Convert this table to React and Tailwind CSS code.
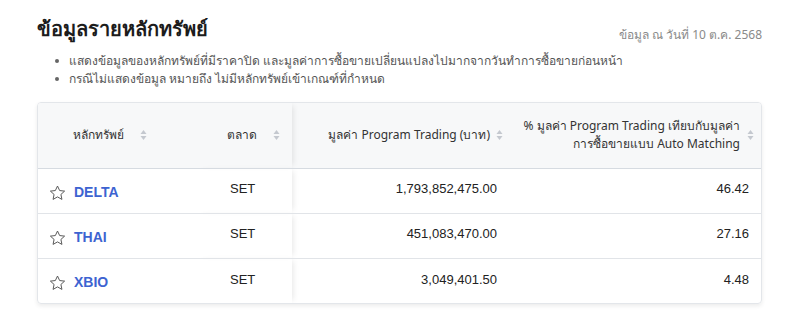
import React from "react";

const rows = [
  { symbol: "DELTA", market: "SET", value: "1,793,852,475.00", pct: "46.42" },
  { symbol: "THAI", market: "SET", value: "451,083,470.00", pct: "27.16" },
  { symbol: "XBIO", market: "SET", value: "3,049,401.50", pct: "4.48" },
];

function SortIcon() {
  return (
    <svg width="7" height="12" viewBox="0 0 7 12" className="shrink-0">
      <path d="M3.5 1 L6.5 5 L0.5 5 Z" fill="#c4c8cf" />
      <path d="M3.5 11 L6.5 7 L0.5 7 Z" fill="#c4c8cf" />
    </svg>
  );
}

function StarIcon() {
  return (
    <svg width="17" height="16" viewBox="0 0 24 23" fill="none" stroke="#555" strokeWidth="1.4" strokeLinejoin="round">
      <path d="M12 1.5 L15.1 8 L22.2 8.8 L16.9 13.6 L18.4 20.7 L12 17.1 L5.6 20.7 L7.1 13.6 L1.8 8.8 L8.9 8 Z" />
    </svg>
  );
}

export default function App() {
  return (
    <div className="w-[812px] h-[329px] bg-white pl-[37px] pr-[50px] pt-[14px] font-['Noto_Sans','Liberation_Sans',sans-serif]">
      <div className="flex items-end justify-between">
        <h1 className="text-[20px] font-bold text-[#1c1c1c] leading-[30px]">ข้อมูลรายหลักทรัพย์</h1>
        <span className="text-[12px] text-[#8a8a8a] leading-[20px] mb-[-1px]">ข้อมูล ณ วันที่ 10 ต.ค. 2568</span>
      </div>
      <ul className="mt-[8px] pl-[18px] text-[12px] leading-[18px] text-[#555]">
        <li className="flex items-center gap-[10px]">
          <span className="w-[4px] h-[4px] rounded-full bg-[#666]"></span>
          แสดงข้อมูลของหลักทรัพย์ที่มีราคาปิด และมูลค่าการซื้อขายเปลี่ยนแปลงไปมากจากวันทำการซื้อขายก่อนหน้า
        </li>
        <li className="flex items-center gap-[10px]">
          <span className="w-[4px] h-[4px] rounded-full bg-[#666]"></span>
          กรณีไม่แสดงข้อมูล หมายถึง ไม่มีหลักทรัพย์เข้าเกณฑ์ที่กำหนด
        </li>
      </ul>
      <div className="mt-[14px] w-[725px] rounded-[4px] border border-[#e3e6ea] shadow-[0_2px_4px_rgba(0,0,0,0.08)] overflow-hidden">
        <table className="w-full table-fixed border-collapse">
          <colgroup>
            <col className="w-[158px]" />
            <col className="w-[96px]" />
            <col className="w-[217px]" />
            <col />
          </colgroup>
          <thead>
            <tr className="h-[65px] bg-[#f7f8f9] text-[12px] text-[#333] border-b border-[#d6dbe1]">
              <th className="font-normal">
                <div className="flex items-center justify-start gap-[16px] pl-[35px]">
                  หลักทรัพย์ <SortIcon />
                </div>
              </th>
              <th className="font-normal shadow-[4px_0_6px_-3px_rgba(0,0,0,0.1)]">
                <div className="flex items-center justify-end gap-[16px] pr-[12px]">
                  ตลาด <SortIcon />
                </div>
              </th>
              <th className="font-normal">
                <div className="flex items-center justify-end gap-[6px] pr-[6px]">
                  มูลค่า Program Trading (บาท) <SortIcon />
                </div>
              </th>
              <th className="font-normal">
                <div className="flex items-center justify-end gap-[7px] pr-[7px]">
                  <span className="text-right leading-[18px]">
                    % มูลค่า Program Trading เทียบกับมูลค่า
                    <br />
                    การซื้อขายแบบ Auto Matching
                  </span>
                  <SortIcon />
                </div>
              </th>
            </tr>
          </thead>
          <tbody className="font-['Liberation_Sans',sans-serif] text-[13px] text-[#222]">
            {rows.map((r, i) => (
              <tr key={r.symbol} className={`h-[45px] ${i < rows.length - 1 ? "border-b border-[#e1e4e8]" : ""}`}>
                <td className="pl-[11px] pt-[4px]">
                  <div className="flex items-center gap-[8px]">
                    <StarIcon />
                    <span className="text-[14px] font-bold text-[#3d63d1]">{r.symbol}</span>
                  </div>
                </td>
                <td className="pl-[34px] pb-[3px] shadow-[4px_0_6px_-3px_rgba(0,0,0,0.1)]">{r.market}</td>
                <td className="text-right pr-[12px] pb-[3px]">{r.value}</td>
                <td className="text-right pr-[12px] pb-[3px]">{r.pct}</td>
              </tr>
            ))}
          </tbody>
        </table>
      </div>
    </div>
  );
}
